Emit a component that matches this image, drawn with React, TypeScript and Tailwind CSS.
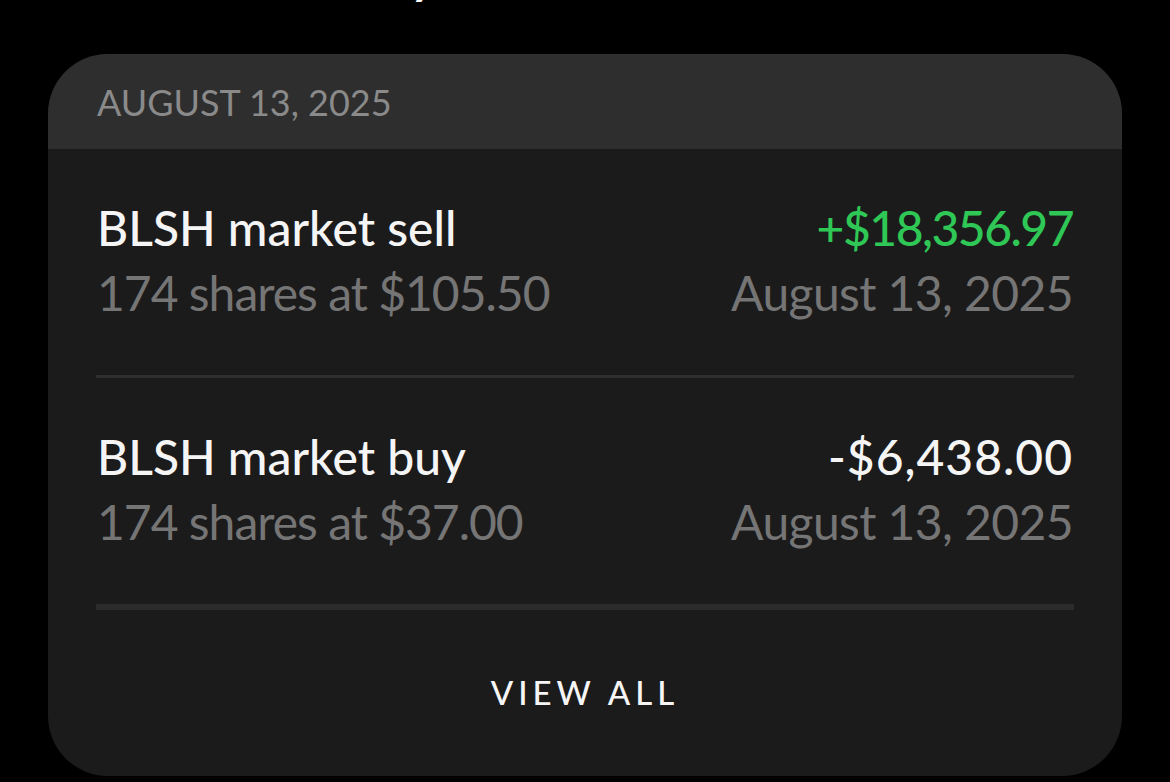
import React from 'react'

const font = { fontFamily: '"Lato", "Noto Sans", sans-serif' }

function TradeRow({ title, detail, amount, date, positive }: any) {
    return (
        <div className="h-[226px] flex items-center justify-between px-[49px] pb-[4px]">
            <div className="flex flex-col">
                <p className="text-[48px] leading-[65px] font-medium text-[#f5f5f5]">{title}</p>
                <p className="text-[48px] leading-[65px] tracking-[-1px] text-[#757575]">{detail}</p>
            </div>
            <div className="flex flex-col items-end">
                <p className={`text-[48px] leading-[65px] font-medium ${positive ? 'text-[#2fc755] tracking-[-1.5px]' : 'text-[#f5f5f5] tracking-[1px]'}`}>{amount}</p>
                <p className="text-[48px] leading-[65px] tracking-[-0.6px] text-[#757575]">{date}</p>
            </div>
        </div>
    )
}

function Divider({ thick }: { thick?: boolean }) {
    return <div className={`mx-[48px] ${thick ? 'h-[6px] bg-[#2b2b2b]' : 'h-[3px] bg-[#2f2f2f]'}`}></div>
}

export default function App() {
    return (
        <div className="w-[1170px] h-[782px] bg-black overflow-hidden" style={font}>
            <div className="h-[54px] overflow-hidden pl-[117px]">
                <p className="text-[48px] leading-[60px] font-bold text-white -mt-[54px] whitespace-nowrap">Recent activity</p>
            </div>
            <div className="mx-[48px] w-[1074px] rounded-[60px] bg-[#1c1b1c] overflow-hidden">
                <div className="h-[95px] bg-[#2e2e2e] flex items-center px-[49px]">
                    <p className="text-[36px] text-[#8a8a8a]">AUGUST 13, 2025</p>
                </div>
                <TradeRow title="BLSH market sell" detail="174 shares at $105.50" amount="+$18,356.97" date="August 13, 2025" positive />
                <Divider />
                <TradeRow title="BLSH market buy" detail="174 shares at $37.00" amount="-$6,438.00" date="August 13, 2025" />
                <Divider thick />
                <div className="h-[166px] flex items-center justify-center">
                    <p className="text-[33px] font-medium tracking-[5px] text-[#f5f5f5]">VIEW ALL</p>
                </div>
            </div>
        </div>
    )
}
